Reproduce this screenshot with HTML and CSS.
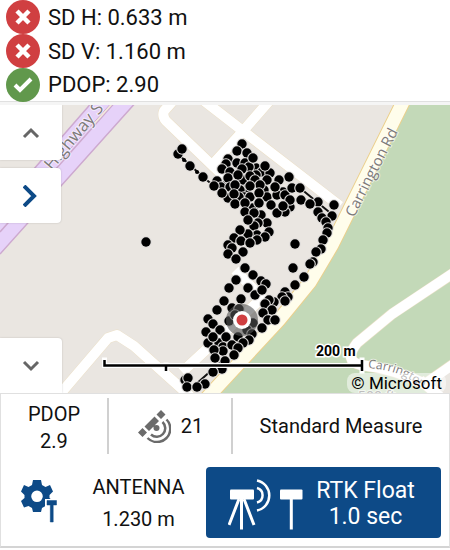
FILE: index.html
```html
<!DOCTYPE html>
<html lang="en">
<head>
  <meta charset="UTF-8">
  <meta name="viewport" content="width=device-width, initial-scale=1.0">
  <title>Standard Measure</title>
  <link rel="stylesheet" href="styles.css">
</head>
<body>
  <div class="app">
    <ul class="status-list">
      <li class="status">
        <svg class="status-icon" viewBox="0 0 34 34"><circle cx="17" cy="17" r="17" fill="#d03f41"/><path d="M11 11L23 23M23 11L11 23" stroke="#fff" stroke-width="4.500"/></svg>
        <span>SD H: 0.633 m</span>
      </li>
      <li class="status">
        <svg class="status-icon" viewBox="0 0 34 34"><circle cx="17" cy="17" r="17" fill="#d03f41"/><path d="M11 11L23 23M23 11L11 23" stroke="#fff" stroke-width="4.500"/></svg>
        <span>SD V: 1.160 m</span>
      </li>
      <li class="status">
        <svg class="status-icon" viewBox="0 0 34 34"><circle cx="17" cy="17" r="17" fill="#61984c"/><path d="M9 17L14 22L25 11" fill="none" stroke="#fff" stroke-width="4"/></svg>
        <span>PDOP: 2.90</span>
      </li>
    </ul>

    <div class="map">
      <svg class="map-canvas" viewBox="0 105 450 288" preserveAspectRatio="xMidYMid slice">
        <defs>
          <marker id="pt" markerUnits="userSpaceOnUse" markerWidth="14" markerHeight="14" refX="7" refY="7">
            <circle cx="7" cy="7" r="5.800" fill="#dedcda"/>
            <circle cx="7" cy="7" r="4.700" fill="#000"/>
          </marker>
          <path id="carrington-low" d="M368 368Q395 370 412 381T450 402"/>
        </defs>

        <rect y="105" width="450" height="288" fill="#eae6e1"/>
        <path d="M401 100L332 245L310 282L279 322L208 400H450V100Z" fill="#c3d9b8"/>

        <!-- highway -->
        <path d="M94 100L0 208V254L138 100Z" fill="#e6d2f9"/>
        <path d="M94 100L0 208M138 100L0 254M117 100L0 232" fill="none" stroke="#cda9cf" stroke-width="1.500"/>
        <path d="M114 100L70 149" stroke="#cda9cf"/>
        <path d="M115.500 100L94 124" stroke="#f3ead8" stroke-width="1.500"/>

        <!-- service roads -->
        <g fill="none" stroke="#ece0c8" stroke-width="11" stroke-linejoin="round">
          <path d="M172 102L164 111Q162 116 166 121L240 192"/>
          <path d="M203 100L243 131L340 206"/>
          <path d="M270 100L243 131L212 165"/>
          <path d="M55 400L108 338L117 335L134 346L192 398M182 372L262 298L235 270"/>
          <path d="M455 272L392 314L357 343Q343 361 361 365Q395 369 425 384L455 363M420 380L450 405"/>
        </g>
        <path d="M430 382L450 370V393H442Z" fill="#eae6e1"/>
        <g fill="none" stroke="#fff" stroke-width="10" stroke-linejoin="round">
          <path d="M172 102L164 111Q162 116 166 121L240 192"/>
          <path d="M203 100L243 131L340 206"/>
          <path d="M270 100L243 131L212 165"/>
          <path d="M55 400L108 338L117 335L134 346L192 398M182 372L262 298L235 270"/>
          <path d="M455 272L392 314L357 343Q343 361 361 365Q395 369 425 384L455 363M420 380L450 405"/>
        </g>

        <path d="M404 100L332 245L310 282L279 320L205 400" fill="none" stroke="#ecd08c" stroke-width="15"/>
        <path d="M404 100L332 245L310 282L279 320L205 400" fill="none" stroke="#fffdeb" stroke-width="13"/>

        <g class="road-name">
          <text x="52" y="171" font-size="17" transform="rotate(-50 52 171)">Highway S</text>
          <text x="354" y="218" font-size="15" transform="rotate(-63 354 218)">Carrington Rd</text>
          <text font-size="12"><textPath href="#carrington-low">Carrington</textPath></text>
          <text x="358" y="401" font-size="14">500 ft</text>
        </g>

        <!-- survey points -->
        <path d="M178 154L203 177L214 186M300 188L334 216M195 385L222 361" stroke="#111" stroke-width="2" fill="none"/>
        <circle cx="184" cy="160" r="2"/><circle cx="197" cy="172" r="2"/>
        <polyline class="points" points="178,154 182,149 190,166 203,177 146,242 242,144 237,151 228,159 247,153
          237,163 245,163 256,168 226,164 222,169 249,167 242,169 253,158 262,172 270,173 265,166 230,172 256,175 243,180 250,176 228,182
          217,181 221,187 214,186 246,190 228,178 230,187 238,175 240,190 235,185 255,180 267,180 264,190 260,185 250,186 244,197
          228,198 222,193 239,197 234,194 267,197 250,197 259,193 235,204 253,208 259,203 245,203 245,212 261,215 254,213
          267,223 258,223 254,226 248,220 289,177 279,180 283,192 277,195 285,195 275,187 292,188 300,188 290,207 290,200 285,212
          271,205 277,213 283,206 301,200 318,202 310,204 318,212 334,205 332,216 322,218 326,222 328,228 327,233 323,240 321,249 316,252 313,262 310,264
          295,244 293,268 304,277 295,285 285,292 288,297 282,297 285,301
          269,232 257,235 265,237 248,234 240,230 234,238 228,245 241,241 257,240 250,243 232,248 228,254 243,252 236,259
          245,268 253,275 236,280 229,288 248,288 261,281 266,284 255,295 262,290 241,299 224,301 217,310 208,319
          232,308 239,309 274,302 269,300 265,304 272,310 263,313 268,320 275,320 229,321 235,315 253,323 247,330 262,328
          213,324 206,332 220,330 219,343 208,343 213,337 226,337 223,347 252,334 249,340 238,337 243,343 232,345 238,348
          223,351 214,350 234,355 225,361 215,358 222,369 213,372 185,380 188,378 187,387 205,384 197,387"/>

        <!-- current position -->
        <circle cx="242" cy="320" r="16" fill="#555" fill-opacity=".6"/>
        <circle cx="242" cy="320" r="9" fill="#fff"/>
        <circle cx="242" cy="320" r="5.500" fill="#d03f41"/>

        <!-- scale bar -->
        <path d="M104.500 360V365.500H362M166 365V371M362 360V371" fill="none" stroke="#fff" stroke-width="5" stroke-linecap="square"/>
        <path d="M104.500 360V365.500H362M166 365V371M362 360V371" fill="none" stroke="#000" stroke-width="2.500"/>
        <text class="scale-text" x="316" y="356">200 m</text>
      </svg>

      <div class="map-controls">
        <button class="map-button" aria-label="Collapse"><svg width="18" height="12" viewBox="0 0 18 12"><path d="M2 10L9 3L16 10" stroke="#666"/></svg></button>
        <button class="map-button next" aria-label="Next"><svg width="16" height="22" viewBox="0 0 16 22"><path d="M1 1L11 11L1 21" stroke="#0d4a87"/></svg></button>
        <button class="map-button last" aria-label="Expand"><svg width="18" height="12" viewBox="0 0 18 12"><path d="M2 2L9 9L16 2" stroke="#666"/></svg></button>
      </div>
      <div class="credit">© Microsoft</div>
    </div>

    <div class="panel">
      <div class="info-row">
        <div class="info-cell stacked"><span>PDOP</span><span>2.9</span></div>
        <div class="info-cell">
          <svg width="34" height="34" viewBox="137 409 34 34">
            <g fill="#6b6b6b">
              <path d="M156.500 414.500L161 410L165.500 414.500L161 419ZM138 432.500L142.500 428L147 432.500L142.500 437ZM144.500 426.500L154.500 416.500L159 421L149 431Z"/>
              <circle cx="156.500" cy="428" r="3"/><path d="M150 422L157 429" stroke="#6b6b6b" stroke-width="2"/>
            </g>
            <path d="M162.500 422A8 8 0 0 1 151 434.500M166.500 419.500A13 13 0 0 1 147.500 438" fill="none" stroke="#6b6b6b" stroke-width="2.500"/>
          </svg>
          <span>21</span>
        </div>
        <div class="info-cell">Standard Measure</div>
      </div>

      <div class="action-row">
        <button class="settings-button" aria-label="Antenna settings">
          <svg width="38" height="44" viewBox="20 480 38 44">
            <path fill="#0d4a87" fill-rule="evenodd" d="M33 481H41L42 486L45.500 488L50 486L53 492.500L49.500 496V499L53 502L50 508.500L45.500 507L42 509L41 513H33L32 509L28.500 507L24 508.500L21 502L24.500 499V496L21 492.500L24 486L28.500 488L32 486ZM37 491.500A5.800 5.800 0 1 0 37 503.100A5.800 5.800 0 1 0 37 491.500Z"/>
            <path d="M45 500H59V508H55V524H48V508H45Z" fill="#fff"/>
            <path d="M47 501.500H56.500V506H53.200V523H50.300V506H47Z" fill="#0d4a87" stroke="#0d4a87" stroke-linejoin="round" stroke-width=".5"/>
          </svg>
        </button>
        <div class="antenna"><span>ANTENNA</span><span>1.230 m</span></div>
        <button class="measure-button">
          <svg width="76" height="54" viewBox="228 475 76 54">
            <g fill="#fff">
              <rect x="230" y="487.500" width="24" height="10" rx="1"/>
              <rect x="280" y="487.500" width="22.500" height="10" rx="1"/>
            </g>
            <path d="M239 497L229 523M241.500 497V527.500M244 497L254 523M291.300 497V527.500" fill="none" stroke="#fff" stroke-width="3"/>
            <path d="M257 486A7.500 7.500 0 0 1 257 500.500M257 478.500A15.300 15.300 0 0 1 257 508.500" fill="none" stroke="#fff" stroke-width="2.500"/>
          </svg>
          <span>RTK Float<br>1.0 sec</span>
        </button>
      </div>
    </div>
  </div>
</body>
</html>
```
FILE: styles.css
```css
* {
  box-sizing: border-box;
}

body {
  margin: 0;
  font-family: Roboto, sans-serif;
  font-size: 20px;
  color: #111;
  background-color: #fff;
}

button {
  border: none;
  padding: 0;
  font-family: inherit;
  cursor: pointer;
}

.app {
  background-color: #f5f5f5;
}

.status-list {
  list-style: none;
  margin: 0 0 3px;
  padding: 0 6px;
  background-color: #fff;
  border-bottom: 1px solid #e0e0e0;
}

.status {
  display: flex;
  align-items: center;
  gap: 8px;
  height: 34px;
  font-size: 22px;
}

.status:last-child {
  height: 33px;
}

.status-icon {
  width: 34px;
  height: 34px;
}

.map {
  position: relative;
  height: 288px;
  overflow: hidden;
}

.map-canvas {
  display: block;
  width: 100%;
  height: 100%;
}

.road-name {
  font-family: "Open Sans", sans-serif;
  fill: #7d7a7a;
  stroke: #fff;
  stroke-opacity: 0.6;
  stroke-width: 2px;
  paint-order: stroke;
}

.points {
  fill: none;
  marker: url(#pt);
}

.scale-text {
  font-size: 14px;
  font-weight: bold;
  stroke: #fff;
  stroke-width: 3px;
  paint-order: stroke;
}

.map-controls {
  position: absolute;
  top: 0;
  bottom: 0;
  left: 0;
  display: flex;
  flex-direction: column;
  gap: 8px;
}

.map-button {
  display: flex;
  align-items: center;
  justify-content: center;
  width: 62px;
  height: 55px;
  background-color: #fff;
  border-radius: 0 0 4px 0;
  box-shadow: 0 0 2px rgba(0, 0, 0, 0.2);
}

.map-button path {
  fill: none;
  stroke-width: 3px;
}

.next {
  width: 61px;
  border-radius: 0 4px 4px 0;
}

.next path {
  stroke-width: 4px;
}

.last {
  margin-top: auto;
  border-radius: 0 4px 0 0;
}

.credit {
  position: absolute;
  right: 4px;
  bottom: 0;
  padding: 0 4px;
  font-size: 17px;
  line-height: 20px;
  color: #000;
  background-color: rgba(255, 255, 255, 0.5);
  border-radius: 8px;
}

.panel {
  background-color: #fff;
  border: 1px solid #e0e0e0;
  border-bottom: 2px solid #d4d4d4;
}

.info-row {
  display: grid;
  grid-template-columns: 108px 124px 1fr;
  padding-top: 4px;
}

.info-cell {
  display: flex;
  align-items: center;
  justify-content: center;
  gap: 10px;
  height: 56px;
  border-right: 2px solid #d0d0d0;
}

.info-cell:last-child {
  border-right: none;
}

.stacked {
  flex-direction: column;
  gap: 0;
  padding-top: 3px;
  line-height: 27px;
}

.action-row {
  display: flex;
  align-items: center;
  padding: 13px 8px 8px 0;
}

.settings-button {
  width: 76px;
  background: none;
}

.antenna {
  display: flex;
  flex-direction: column;
  align-items: center;
  width: 123px;
  line-height: 32px;
}

.measure-button {
  display: flex;
  flex: 1;
  align-items: center;
  justify-content: center;
  gap: 12px;
  height: 71px;
  margin-left: 6px;
  padding: 2px 4px 0 0;
  font-size: 23px;
  line-height: 26px;
  color: #fff;
  background-color: #0d4a87;
  border-radius: 4px;
}
```
